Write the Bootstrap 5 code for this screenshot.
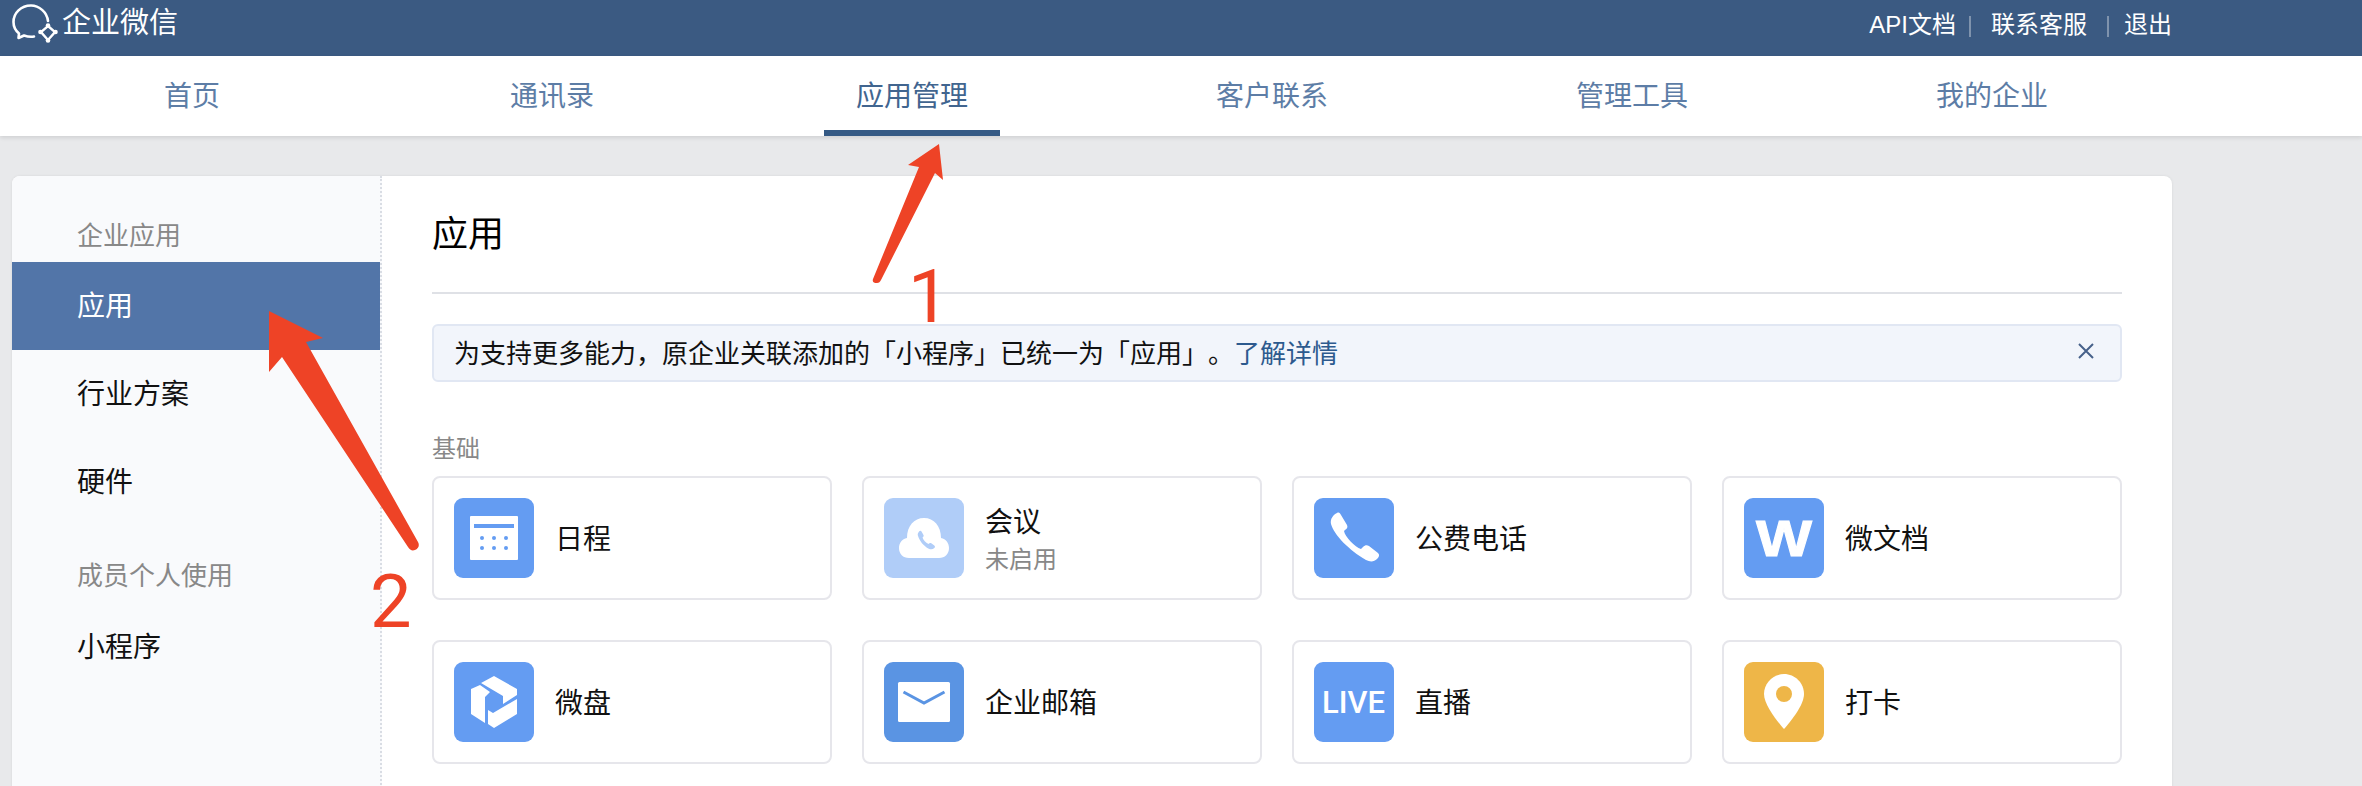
<!DOCTYPE html>
<html lang="zh-CN">
  <head>
    <meta charset="UTF-8" />
    <meta name="viewport" content="width=device-width, initial-scale=1.0" />
    <title>企业微信 应用管理</title>
    <link
      href="https://cdn.jsdelivr.net/npm/bootstrap@5.3.0/dist/css/bootstrap.min.css"
      rel="stylesheet"
    />
    <style>
      html,
      body {
        height: 786px;
        overflow: hidden;
      }
      body {
        position: relative;
        background: #e8e9eb;
        color: #111;
        font-family: "Liberation Sans", "Noto Sans CJK SC", sans-serif;
        text-spacing-trim: space-all;
      }
      .top-bar {
        height: 56px;
        background: #3b5a82;
        color: #fff;
      }
      .top-inner,
      .tabs-inner,
      .shell {
        width: 2160px;
        margin-left: 12px;
      }
      .top-inner {
        height: 56px;
      }
      .brand {
        height: 48px;
      }
      .brand-name {
        font-size: 29px;
        line-height: 44px;
        margin-left: 2px;
        margin-top: -3px;
      }
      .top-links {
        font-size: 24px;
        line-height: 50px;
      }
      .top-links a {
        color: #fff;
        text-decoration: none;
      }
      .top-sep {
        width: 2px;
        height: 21px;
        background: rgba(255, 255, 255, 0.35);
        margin: 2px 20px 0 13px;
      }
      .top-sep.tight {
        margin: 2px 15px 0 20px;
      }
      .tab-bar {
        height: 80px;
        background: #fff;
        box-shadow: 0 2px 4px rgba(0, 0, 0, 0.1);
        position: relative;
      }
      .tab-bar .nav-link {
        width: 360px;
        padding: 0;
        text-align: center;
        font-size: 28px;
        color: #5d7da6;
      }
      .tab-label {
        display: inline-block;
        width: 176px;
        height: 80px;
        line-height: 82px;
      }
      .tab-bar .nav-link.active {
        color: #41658f;
      }
      .tab-bar .active .tab-label {
        box-shadow: inset 0 -6px 0 #355a85;
      }
      .shell {
        margin-top: 40px;
        height: 640px;
        background: #fff;
        border-radius: 8px 8px 0 0;
        box-shadow: 0 0 3px rgba(0, 0, 0, 0.08);
        overflow: hidden;
      }
      .side {
        width: 370px;
        flex: none;
        background: #f9fafc;
        border-right: 2px dotted #d9dde4;
      }
      .side-head {
        padding-left: 65px;
        font-size: 26px;
        line-height: 36px;
        color: #888;
      }
      .side-head.first {
        margin-top: 42px;
        margin-bottom: 8px;
      }
      .side-head.second {
        margin-top: 32px;
        margin-bottom: 16px;
      }
      .side .list-group-item {
        height: 88px;
        padding: 0 0 0 65px;
        border: 0;
        border-radius: 0;
        background: transparent;
        font-size: 28px;
        line-height: 90px;
        color: #111;
      }
      .side .list-group-item.active {
        background: #5275a8;
        color: #fff;
      }
      .side .mini-item {
        height: 60px;
        line-height: 76px;
      }
      .main-pane {
        flex: 1;
        padding: 32px 50px 0;
      }
      .pane-title {
        margin: 0;
        padding-top: 2px;
        padding-bottom: 32px;
        border-bottom: 2px solid #dfe1e6;
        font-size: 36px;
        font-weight: 400;
        line-height: 50px;
        color: #000;
      }
      .notice {
        height: 58px;
        margin: 30px 0 0;
        padding: 2px 26px 0 20px;
        background: #f2f5fb;
        border: 2px solid #e1e7f3;
        border-radius: 6px;
        font-size: 26px;
        color: #111;
      }
      .notice a {
        color: #2d5a8e;
        text-decoration: none;
      }
      .notice-close {
        padding: 0;
        border: 0;
        background: none;
        line-height: 0;
        margin-top: -6px;
      }
      .group-title {
        margin: 50px 0 10px;
        font-size: 24px;
        line-height: 34px;
        color: #888;
      }
      .app-row {
        --bs-gutter-x: 30px;
        --bs-gutter-y: 40px;
      }
      .app-tile {
        height: 124px;
        padding-left: 20px;
        border: 2px solid #e6e6eb;
        border-radius: 8px;
      }
      .app-icon {
        width: 80px;
        height: 80px;
        flex: none;
        display: block;
      }
      .app-text {
        margin-left: 21px;
        padding-top: 3px;
        font-size: 28px;
        line-height: 40px;
        color: #111;
      }
      .app-off {
        font-size: 24px;
        line-height: 34px;
        color: #888;
      }
      .mark-layer {
        position: absolute;
        top: 0;
        left: 0;
        z-index: 10;
        pointer-events: none;
      }
      .step-num {
        position: absolute;
        z-index: 10;
        color: #ee4326;
        font-family: Roboto, sans-serif;
        font-weight: 400;
        font-size: 74px;
        line-height: 74px;
      }
      .step-one {
        left: 908px;
        top: 260px;
      }
      .step-two {
        left: 370px;
        top: 565px;
      }
    </style>
  </head>
  <body>
    <!-- top bar -->
    <div class="top-bar">
      <div class="top-inner d-flex justify-content-between align-items-start">
        <div class="brand d-flex align-items-center">
          <svg width="48" height="48" viewBox="12 0 48 48" fill="none" stroke="#fff">
            <path
              stroke-width="2.6"
              stroke-linecap="round"
              stroke-linejoin="round"
              d="M48 21C47 12 39 5.5 31 5.5 21 5.5 13.5 13 13.5 22c0 5 2.5 9 5.5 11.5l-.5 4.5 5.5-2.500c3 1 7 1.500 10 1"
            />
            <path stroke-width="2.4" d="M48 26l7 6-7 8-7-8z" />
            <g fill="#fff" stroke="none">
              <circle cx="48" cy="25.500" r="2.300" />
              <circle cx="55.500" cy="32" r="2.300" />
              <circle cx="48" cy="40.500" r="2.300" />
              <circle cx="40.500" cy="32" r="2.300" />
            </g>
          </svg>
          <span class="brand-name">企业微信</span>
        </div>
        <div class="top-links d-flex align-items-center">
          <a href="#">API文档</a>
          <span class="top-sep"></span>
          <a href="#">联系客服</a>
          <span class="top-sep tight"></span>
          <a href="#">退出</a>
        </div>
      </div>
    </div>

    <!-- main tabs -->
    <div class="tab-bar">
      <ul class="nav tabs-inner flex-nowrap">
        <li class="nav-item"><a class="nav-link" href="#"><span class="tab-label">首页</span></a></li>
        <li class="nav-item"><a class="nav-link" href="#"><span class="tab-label">通讯录</span></a></li>
        <li class="nav-item"><a class="nav-link active" href="#"><span class="tab-label">应用管理</span></a></li>
        <li class="nav-item"><a class="nav-link" href="#"><span class="tab-label">客户联系</span></a></li>
        <li class="nav-item"><a class="nav-link" href="#"><span class="tab-label">管理工具</span></a></li>
        <li class="nav-item"><a class="nav-link" href="#"><span class="tab-label">我的企业</span></a></li>
      </ul>
    </div>

    <div class="shell d-flex">
      <!-- left menu -->
      <div class="side">
        <div class="side-head first">企业应用</div>
        <div class="list-group">
          <a href="#" class="list-group-item active">应用</a>
          <a href="#" class="list-group-item">行业方案</a>
          <a href="#" class="list-group-item">硬件</a>
        </div>
        <div class="side-head second">成员个人使用</div>
        <div class="list-group">
          <a href="#" class="list-group-item mini-item">小程序</a>
        </div>
      </div>

      <div class="main-pane">
        <h1 class="pane-title">应用</h1>

        <div class="alert notice d-flex justify-content-between align-items-center">
          <span>为支持更多能力&#xFF0C;原企业关联添加的「小程序」已统一为「应用」。<a href="#">了解详情</a></span>
          <button type="button" class="notice-close" aria-label="关闭">
            <svg width="16" height="16" viewBox="0 0 16 16" stroke="#47618a" stroke-width="2" fill="none">
              <path d="M1 1l14 14M15 1L1 15" />
            </svg>
          </button>
        </div>

        <div class="group-title">基础</div>

        <div class="row row-cols-4 app-row">
          <div class="col">
            <div class="card app-tile flex-row align-items-center">
              <svg class="app-icon" viewBox="0 0 80 80">
                <rect width="80" height="80" rx="9" fill="#649cf2" />
                <rect x="16" y="18" width="48" height="44" rx="1" fill="#fff" />
                <rect x="20" y="26" width="40" height="4" fill="#649cf2" />
                <g fill="#649cf2">
                  <circle cx="28" cy="40" r="2" />
                  <circle cx="40" cy="40" r="2" />
                  <circle cx="52" cy="40" r="2" />
                  <circle cx="28" cy="50" r="2" />
                  <circle cx="40" cy="50" r="2" />
                  <circle cx="52" cy="50" r="2" />
                </g>
              </svg>
              <div class="app-text">日程</div>
            </div>
          </div>
          <div class="col">
            <div class="card app-tile flex-row align-items-center">
              <svg class="app-icon" viewBox="0 0 80 80">
                <rect width="80" height="80" rx="9" fill="#b0cdf8" />
                <path
                  fill="#fff"
                  d="M25 60C19 60 15 56 15 50c0-5 3-9 8-10C23 28 30 20 40 20s17 8 17 20c5 1 8 5 8 10 0 6-4 10-10 10z"
                />
                <path
                  fill="#b0cdf8"
                  d="M35 33.500c1-1 2-1 2.500 0l2 3.500c.5 1 0 1.800-1 2.500 1 3 3 5 6 6.500.8-1 1.800-1.300 2.800-.8l3 2.200c1 .8.8 1.800 0 2.600-1.500 1.500-3.500 1.700-5.500.7-5-2.500-9.500-8-11-13.500-.4-1.500.7-3 1.700-4.200z"
                />
              </svg>
              <div class="app-text">
                <div>会议</div>
                <div class="app-off">未启用</div>
              </div>
            </div>
          </div>
          <div class="col">
            <div class="card app-tile flex-row align-items-center">
              <svg class="app-icon" viewBox="0 0 80 80">
                <rect width="80" height="80" rx="9" fill="#649cf2" />
                <path
                  fill="#fff"
                  d="M23 15c2-1 3 0 4 2l6 10c1 2 0 4-2 5l-1 1c1 6 11 16 17 18l2-2c2-2 4-2 6-1l9 7c2 2 1 4-1 6-3 3-7 3-11 1C35 52 20 37 17 26c-1-5 2-9 6-11z"
                />
              </svg>
              <div class="app-text">公费电话</div>
            </div>
          </div>
          <div class="col">
            <div class="card app-tile flex-row align-items-center">
              <svg class="app-icon" viewBox="0 0 80 80">
                <rect width="80" height="80" rx="9" fill="#649cf2" />
                <text
                  x="12"
                  y="58"
                  textLength="56"
                  lengthAdjust="spacingAndGlyphs"
                  fill="#fff"
                  stroke="#fff"
                  stroke-width="1"
                  font-family="Liberation Sans, sans-serif"
                  font-weight="700"
                  font-size="50"
                >W</text>
              </svg>
              <div class="app-text">微文档</div>
            </div>
          </div>
          <div class="col">
            <div class="card app-tile flex-row align-items-center">
              <svg class="app-icon" viewBox="0 0 80 80">
                <rect width="80" height="80" rx="9" fill="#649cf2" />
                <g fill="#fff">
                  <path d="M27 21l13-7 23 13v6l-14 9v-8z" />
                  <path d="M17 27l9-4 10 7-5 5v26l-14-9z" />
                  <path d="M34 48l5 3 24-14v15L40 66l-6-4z" />
                </g>
              </svg>
              <div class="app-text">微盘</div>
            </div>
          </div>
          <div class="col">
            <div class="card app-tile flex-row align-items-center">
              <svg class="app-icon" viewBox="0 0 80 80">
                <rect width="80" height="80" rx="9" fill="#5a94e3" />
                <rect x="14" y="20" width="52" height="40" rx="1.500" fill="#fff" />
                <path d="M19.500 30L40 41l20.500-11" fill="none" stroke="#5a94e3" stroke-width="3" />
              </svg>
              <div class="app-text">企业邮箱</div>
            </div>
          </div>
          <div class="col">
            <div class="card app-tile flex-row align-items-center">
              <svg class="app-icon" viewBox="0 0 80 80">
                <rect width="80" height="80" rx="9" fill="#649cf2" />
                <text
                  x="8"
                  y="51"
                  textLength="63"
                  lengthAdjust="spacingAndGlyphs"
                  fill="#fff"
                  font-family="Roboto, sans-serif"
                  font-weight="500"
                  font-size="31"
                >LIVE</text>
              </svg>
              <div class="app-text">直播</div>
            </div>
          </div>
          <div class="col">
            <div class="card app-tile flex-row align-items-center">
              <svg class="app-icon" viewBox="0 0 80 80">
                <rect width="80" height="80" rx="9" fill="#eeb648" />
                <path fill="#fff" d="M40 12C29 12 20 21 20 32c0 11 13 27 20 35 7-8 20-24 20-35 0-11-9-20-20-20z" />
                <circle cx="40" cy="32" r="8" fill="#eeb648" />
              </svg>
              <div class="app-text">打卡</div>
            </div>
          </div>
        </div>
      </div>
    </div>

    <!-- red annotations over the page -->
    <svg class="mark-layer" width="2362" height="786" viewBox="0 0 2362 786" fill="#ee4326">
      <path d="M939 144L908 165l11 2-46 112c-1 3 1 4 4 4 2 0 3-1 4-3l54-107 8 7z" />
      <path d="M269 311l54 27-17 4 112 200c2 4 0 7-3 8-3 1-5 0-7-3L282 357l-13 15z" />
    </svg>
    <span class="step-num step-one">1</span>
    <span class="step-num step-two">2</span>

    <script src="https://cdn.jsdelivr.net/npm/bootstrap@5.3.0/dist/js/bootstrap.bundle.min.js"></script>
  </body>
</html>
